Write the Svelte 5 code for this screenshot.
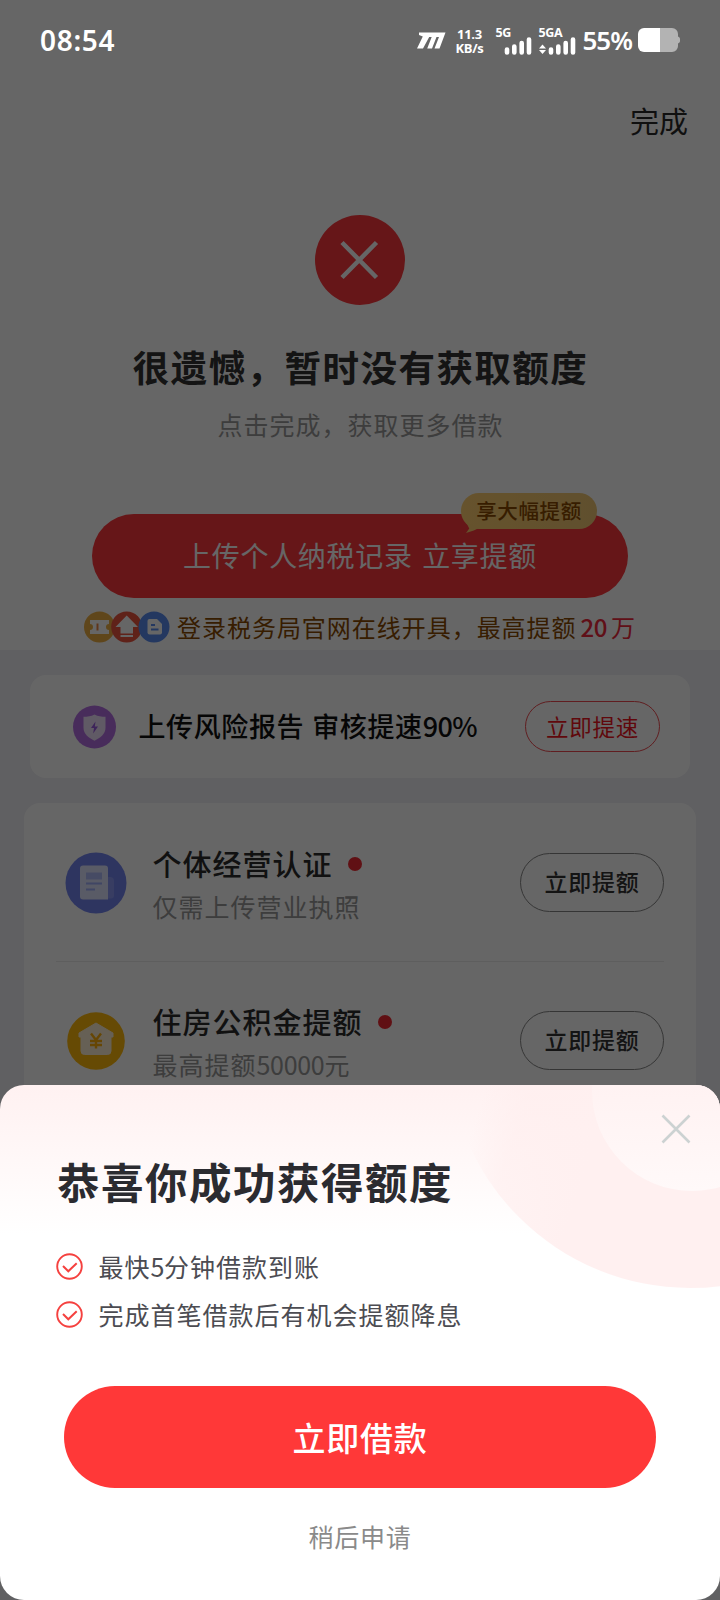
<script lang="ts">
  const items = [
    { icon: "license", title: "个体经营认证", desc: "仅需上传营业执照", action: "立即提额" },
    { icon: "house", title: "住房公积金提额", desc: "最高提额50000元", action: "立即提额" },
  ];

  const benefits = ["最快5分钟借款到账", "完成首笔借款后有机会提额降息"];

  let sheetOpen = true;

  function closeSheet() {
    sheetOpen = false;
  }

  // digits are set tighter than the chinese text around them
  function splitDigits(text: string) {
    return text.split(/(\d+%?)/).filter((e) => e);
  }
</script>

<div class="screen">
  <div class="page">
    <header><button class="done">完成</button></header>

    <section class="result">
      <svg class="fail" viewBox="0 0 90 90">
        <circle cx="45" cy="45" r="45" fill="#ff373c" />
        <path d="M27 27.500 61.500 62.500M61.500 27.500 27 62.500" stroke="#fff" stroke-width="4.500" />
      </svg>
      <h1>很遗憾，暂时没有获取额度</h1>
      <p class="sub">点击完成，获取更多借款</p>
      <button class="upload">
        上传个人纳税记录 立享提额
        <span class="bubble">享大幅提额</span>
      </button>
      <div class="tip">
        <svg class="trio" width="86" height="32" viewBox="0 0 86 32">
          <circle cx="15.5" cy="16" r="15.5" fill="#eeb044" />
          <path d="M6 9h19v4a3 3 0 0 0 0 6v4H6v-4a3 3 0 0 0 0-6z" fill="#fff" />
          <path d="M13.5 12.5v7" stroke="#ee8544" stroke-width="2" />
          <circle cx="42.7" cy="16" r="15.5" fill="#ee5540" />
          <path d="M42.7 4.5 54 16h-5v6.500H36.500V16h-5z" fill="#fff" />
          <path d="M36.500 25h12.500" stroke="#fff" stroke-width="2" />
          <circle cx="70" cy="16" r="15.500" fill="#5a8cf0" />
          <path d="M65.500 8h7.500l5 5v8.500a2 2 0 0 1-2 2H65.500a2 2 0 0 1-2-2V10a2 2 0 0 1 2-2z" fill="#fff" />
          <path d="M67 14h4M67 18.500h7.500" stroke="#5a8cf0" stroke-width="1.800" />
        </svg>
        <span class="tip-text">登录税务局官网在线开具，最高提额</span>
        <span class="amount">20<i>万</i></span>
      </div>
    </section>

    <div class="gray">
      <div class="card report">
        <svg width="44" height="44" viewBox="0 0 44 44">
          <circle cx="22.500" cy="22" r="21.500" fill="#b56fe4" />
          <path d="M22.500 9.500c3.500 2 7 2.200 11 2.200v11c0 6-5 10-11 13-6-3-11-7-11-13v-11c4 0 7.500-.2 11-2.200z" fill="#f6ecff" fill-opacity=".9" />
          <path d="M23.500 16.500 19 23h3l-.8 5.500 4.800-7h-3.200z" fill="#9a5ae0" />
        </svg>
        <span class="report-title">
          {#each splitDigits("上传风险报告 审核提速90%") as part}<span class:num={/^\d/.test(part)}>{part}</span>{/each}
        </span>
        <button class="pill red">立即提速</button>
      </div>

      <div class="card list">
        {#each items as item}
          <div class="item">
            {#if item.icon == "license"}
              <svg width="62" height="62" viewBox="0 0 62 62">
                <circle cx="31" cy="31" r="30.500" fill="#7484f0" />
                <path d="M40 25h5a4 4 0 0 1 4 4v14.500a3 3 0 0 1-3 3h-6z" fill="#8c9af6" />
                <path d="M18 13.500h22a3 3 0 0 1 3 3V47.500H18a3 3 0 0 1-3-3v-28a3 3 0 0 1 3-3z" fill="#dfe4ff" />
                <path d="M21 20.500h16v7H21z" fill="#b0bcfa" />
                <path d="M21 31.500h16M21 37.500h9" stroke="#a0aefa" stroke-width="2" />
              </svg>
            {:else}
              <svg width="62" height="62" viewBox="0 0 62 62">
                <circle cx="31" cy="31" r="28.800" fill="#ffb80c" />
                <path d="M31 13 48 23v4h-2v14a3.500 3.500 0 0 1-3.500 3.500H19.500a3.500 3.500 0 0 1-3.500-3.500V27h-2v-4z" fill="#fff1d4" stroke="#fff1d4" stroke-linejoin="round" />
                <path d="M26 23.500l5 6.500 5-6.500M31 30v8.500M25 31h12M25 35h12" fill="none" stroke="#ffb00c" stroke-width="2.400" />
              </svg>
            {/if}
            <div class="info">
              <div class="name">{item.title}<i class="dot"></i></div>
              <div class="desc">
                {#each splitDigits(item.desc) as part}<span class:num={/^\d/.test(part)}>{part}</span>{/each}
              </div>
            </div>
            <button class="pill">{item.action}</button>
          </div>
        {/each}
      </div>
    </div>
  </div>

  <div class="mask"></div>

  <div class="status">
    <span class="time">08:54</span>
    <svg width="29" height="17" viewBox="0 0 29 17">
      <path d="M2 .5h26.500L22.500 16.500h-5L22 5h-2.500L15 16.500h-4.800L14.700 5h-2.500L6 16.500H0L5.800 4.500 2 3z" fill="#fff" />
    </svg>
    <div class="speed">
      <div>11.3</div>
      <div>KB/s</div>
    </div>
    <div class="sim">
      <b>5G</b>
      <svg width="28" height="18" viewBox="0 0 28 18">
        <path d="M3 12.500v3M10.300 9.500v6M17.700 6v9.500M25 2.500v13" stroke="#fff" stroke-width="4.600" stroke-linecap="round" />
      </svg>
    </div>
    <div class="sim wide">
      <b>5GA</b>
      <svg width="37" height="18" viewBox="0 0 37 18">
        <path d="M3.500 7.500 7 11.500H0zM3.500 17 7 13H0z" fill="#fff" />
        <path d="M12 12.500v3M19.300 9.500v6M26.700 6v9.500M34 2.500v13" stroke="#fff" stroke-width="4.600" stroke-linecap="round" />
      </svg>
    </div>
    <span class="percent">55%</span>
    <svg width="42" height="24" viewBox="0 0 42 24">
      <path d="M22 0h12a6 6 0 0 1 6 6v2.500c1.300.5 2 1.200 2 2.500v2c0 1.300-.7 2-2 2.500V18a6 6 0 0 1-6 6H22z" fill="#b3b3b3" />
      <path d="M6 0h16v24H6a6 6 0 0 1-6-6V6a6 6 0 0 1 6-6z" fill="#fff" />
    </svg>
  </div>

  {#if sheetOpen}
    <div class="sheet">
      <svg class="rings" width="280" height="220" viewBox="440 1085 280 220">
        <defs>
          <linearGradient id="ring" gradientUnits="userSpaceOnUse" x1="475" y1="1120" x2="590" y2="1160">
            <stop offset="0" stop-color="#ffeded" stop-opacity="0" />
            <stop offset=".35" stop-color="#ffeeee" stop-opacity=".65" />
            <stop offset="1" stop-color="#fff0f0" />
          </linearGradient>
          <linearGradient id="core" gradientUnits="userSpaceOnUse" x1="0" y1="1085" x2="0" y2="1191">
            <stop offset="0" stop-color="#fff2f2" />
            <stop offset="1" stop-color="#fff9f9" />
          </linearGradient>
        </defs>
        <circle cx="690" cy="1046" r="242" fill="url(#ring)" />
        <circle cx="692" cy="1091" r="100" fill="url(#core)" />
      </svg>
      <button class="close" aria-label="关闭" on:click={closeSheet}>
        <svg width="30" height="30" viewBox="0 0 30 30">
          <path d="M1.500 1.500 28.500 28.500M28.500 1.500 1.500 28.500" stroke="#ccd2d2" stroke-width="2.600" />
        </svg>
      </button>
      <h2>恭喜你成功获得额度</h2>
      <ul>
        {#each benefits as benefit}
          <li>
            <svg width="27" height="27" viewBox="0 0 27 27" fill="none" stroke="#f5413f">
              <circle cx="13.500" cy="13.500" r="12.300" stroke-width="1.900" />
              <path d="M7 13 12.300 18.300 20.700 10.300" stroke-width="2" />
            </svg>
            <p>
              {#each splitDigits(benefit) as part}<span class:num={/^\d/.test(part)}>{part}</span>{/each}
            </p>
          </li>
        {/each}
      </ul>
      <button class="borrow">立即借款</button>
      <button class="later" on:click={closeSheet}>稍后申请</button>
    </div>
  {/if}
</div>

<style>
  :global(body) {
    margin: 0;
  }

  .screen {
    position: relative;
    width: 720px;
    height: 1600px;
    overflow: hidden;
    background: #f0f0f5;
    font-family: "Noto Sans CJK SC", "Noto Sans", sans-serif;
    color: #333;
  }

  button {
    border: 0;
    padding: 0;
    background: none;
    font-family: inherit;
    color: inherit;
    white-space: nowrap;
  }

  i {
    font-style: normal;
  }

  svg {
    display: block;
    flex: none;
  }

  .num {
    letter-spacing: -.4px;
  }

  .page {
    background: #fff;
  }

  header {
    display: flex;
    justify-content: flex-end;
    padding: 97px 32px 0 0;
  }

  .done {
    height: 45px;
    font-size: 29px;
    line-height: 46px;
    color: #2a2a2a;
  }

  .result {
    display: flex;
    flex-direction: column;
    align-items: center;
    height: 508px;
    padding-top: 73px;
    box-sizing: border-box;
  }

  .fail {
    width: 90px;
    height: 90px;
  }

  h1 {
    margin: 36px 0 0 1px;
    font-size: 36.500px;
    line-height: 52px;
    letter-spacing: 1.450px;
    font-weight: 700;
    color: #333;
    white-space: nowrap;
  }

  .sub {
    margin: 13px 0 0 1px;
    font-size: 25px;
    line-height: 36px;
    letter-spacing: 1px;
    color: #999;
  }

  .upload {
    position: relative;
    flex: none;
    width: 536px;
    height: 84px;
    margin-top: 72px;
    border-radius: 42px;
    background: #ff373c;
    color: #fff;
    font-size: 28px;
    line-height: 82px;
    letter-spacing: .7px;
    word-spacing: 2.500px;
    padding-bottom: 2px;
  }

  .bubble {
    position: absolute;
    top: -21px;
    right: 31px;
    width: 136px;
    height: 36px;
    border-radius: 18px;
    background: linear-gradient(90deg, #ffcf70, #f0c674);
    color: #8a4a00;
    font-size: 20.500px;
    font-weight: 500;
    line-height: 34px;
    letter-spacing: .6px;
  }

  .bubble::after {
    content: "";
    position: absolute;
    left: 5px;
    top: 29px;
    width: 13px;
    height: 11px;
    background: #fccd70;
    clip-path: polygon(0 0, 100% 55%, 60% 78%, 0 100%, 25% 60%);
  }

  .tip {
    display: flex;
    align-items: center;
    align-self: flex-start;
    height: 46px;
    margin: 6px 0 0 84px;
    font-size: 24px;
    letter-spacing: .970px;
    color: #8a4a00;
    white-space: nowrap;
  }

  .tip-text {
    margin: -1px 0 0 7px;
  }

  .amount {
    margin: -1px 0 0 4px;
    font-weight: 500;
    color: #f0283c;
    letter-spacing: -.5px;
  }

  .amount i {
    margin-left: 4px;
    font-weight: 400;
  }

  .gray {
    background: #f0f0f5;
    padding-top: 25px;
  }

  .card {
    background: #fff;
    box-sizing: border-box;
  }

  .report {
    display: flex;
    align-items: center;
    height: 103px;
    margin: 0 30px;
    padding: 0 30px 0 42px;
    border-radius: 16px;
  }

  .report-title {
    flex: 1;
    margin-left: 22.500px;
    margin-top: -3px;
    font-size: 27px;
    font-weight: 500;
    letter-spacing: .6px;
    word-spacing: 1.500px;
    color: #111;
    white-space: nowrap;
  }

  .report-title .num {
    letter-spacing: -.6px;
  }

  .pill {
    box-sizing: border-box;
    width: 144px;
    height: 59px;
    border: 1px solid #868686;
    border-radius: 30px;
    padding-bottom: 3px;
    font-size: 23px;
    letter-spacing: .8px;
    font-weight: 500;
    color: #333;
  }

  .pill.red {
    width: 135px;
    height: 51px;
    border-color: #f04a50;
    padding-bottom: 2px;
    color: #f0141e;
    font-weight: 400;
    font-size: 22.500px;
  }

  .list {
    margin: 25px 24px 0;
    padding: 1px 32px 0;
    height: 400px;
    border-radius: 16px 16px 0 0;
  }

  .item {
    display: flex;
    align-items: center;
    height: 157px;
    padding-left: 9px;
    border-bottom: 1px solid #ebebeb;
  }

  .info {
    flex: 1;
    margin-left: 25.500px;
    padding-top: 3px;
  }

  .name {
    display: flex;
    align-items: center;
    font-size: 29px;
    line-height: 44px;
    letter-spacing: 1px;
    font-weight: 500;
    color: #2c2c2c;
  }

  .dot {
    width: 14px;
    height: 14px;
    margin: 2px 0 0 15.500px;
    border-radius: 50%;
    background: #f02a32;
  }

  .desc {
    font-size: 25px;
    line-height: 42px;
    letter-spacing: 1px;
    color: #999;
  }

  .desc .num {
    letter-spacing: -.3px;
  }

  .mask {
    position: absolute;
    inset: 0;
    background: rgba(0, 0, 0, .6);
  }

  .status {
    position: absolute;
    top: 0;
    left: 0;
    width: 720px;
    height: 80px;
    box-sizing: border-box;
    padding: 0 40px 0 40px;
    display: flex;
    align-items: center;
    color: #fff;
    font-family: "Noto Sans", sans-serif;
  }

  .time {
    flex: 1;
    font-size: 28px;
    font-weight: 600;
    letter-spacing: .7px;
  }

  .speed {
    width: 28px;
    margin: 2px 0 0 10px;
    font-family: "Open Sans", "Noto Sans", sans-serif;
    font-size: 13px;
    line-height: 14.500px;
    font-weight: 700;
    letter-spacing: -.3px;
    text-align: center;
    white-space: nowrap;
  }

  .sim {
    display: flex;
    flex-direction: column;
    align-items: flex-end;
    width: 36px;
    height: 28px;
    margin-left: 12px;
    margin-top: 4px;
  }

  .sim.wide {
    width: 37px;
    margin-left: 7px;
  }

  .sim b {
    align-self: flex-start;
    height: 9px;
    font-size: 12.500px;
    line-height: 9px;
    letter-spacing: -.3px;
  }

  .percent {
    margin: 0 6px 0 7px;
    font-size: 26px;
    font-weight: 600;
    letter-spacing: -1px;
  }

  .sheet {
    position: absolute;
    left: 0;
    bottom: 0;
    width: 720px;
    height: 515px;
    box-sizing: border-box;
    overflow: hidden;
    display: flex;
    flex-direction: column;
    padding: 70px 0 0;
    border-radius: 24px;
    background: linear-gradient(#fff1f1, #fff 150px);
  }

  .rings {
    position: absolute;
    top: 0;
    right: 0;
  }

  .close {
    position: absolute;
    top: 29px;
    right: 29px;
  }

  h2 {
    position: relative;
    margin: 0 0 0 57px;
    font-size: 42.500px;
    line-height: 52px;
    letter-spacing: 1.500px;
    font-weight: 700;
    color: #2b2b30;
  }

  ul {
    position: relative;
    margin: 35px 0 0 55.500px;
    padding: 0;
    list-style: none;
  }

  li {
    display: flex;
    align-items: center;
    height: 48.500px;
    font-size: 25px;
    letter-spacing: 1px;
    color: #4c4c52;
  }

  li p {
    margin: -1px 0 0 16px;
  }

  .borrow {
    flex: none;
    align-self: center;
    width: 592px;
    height: 102px;
    margin-top: 47px;
    padding-bottom: 1px;
    border-radius: 51px;
    background: #ff3838;
    color: #fff;
    font-size: 33px;
    font-weight: 500;
    letter-spacing: .7px;
  }

  .later {
    align-self: center;
    margin-top: 28px;
    font-size: 25px;
    line-height: 40px;
    letter-spacing: .8px;
    color: #8a8a8a;
  }
</style>
